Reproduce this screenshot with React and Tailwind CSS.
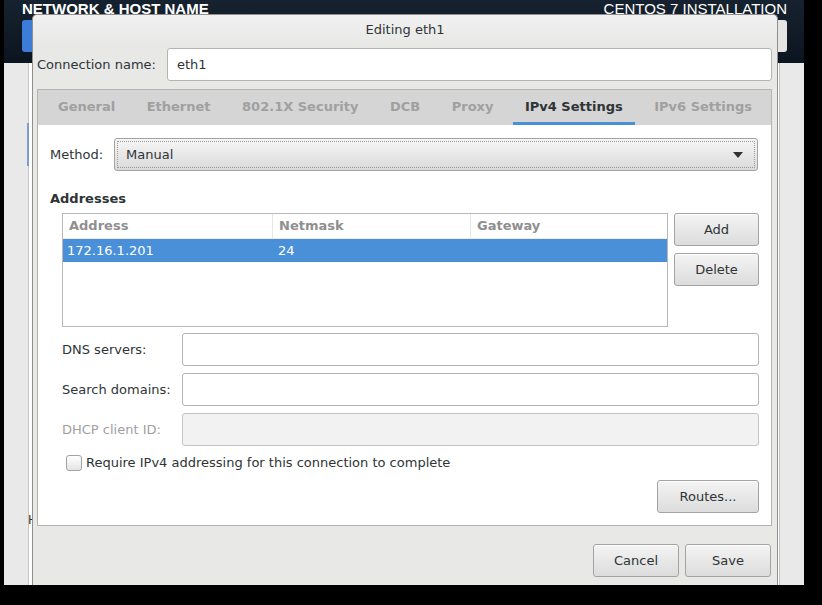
const TABS = [
    { label: "General" },
    { label: "Ethernet" },
    { label: "802.1X Security" },
    { label: "DCB" },
    { label: "Proxy" },
    { label: "IPv4 Settings", active: true },
    { label: "IPv6 Settings" },
];

const FONT = { fontFamily: '"DejaVu Sans", Verdana, sans-serif' };

function GtkButton({ children, className = "" }) {
    return (
        <button
            className={`h-[33px] rounded-[3px] border border-[#a3a3a3] bg-gradient-to-b from-[#f4f4f4] to-[#dcdcdc]
                        text-[13px] text-[#2e3436] flex items-center justify-center shadow-[inset_0_1px_0_#ffffff] ${className}`}
        >
            {children}
        </button>
    );
}

function TextEntry({ value = "", disabled = false, className = "" }) {
    return (
        <div
            className={`h-[33px] rounded-[3px] border flex items-center px-[9px] text-[13px] text-[#2e3436] ${
                disabled ? "bg-[#f2f2f2] border-[#c4c4c4]" : "bg-white border-[#b4b4b4]"
            } ${className}`}
        >
            {value}
        </div>
    );
}

function FieldRow({ label, disabled = false, className = "" }) {
    return (
        <div className={`flex items-center ${className}`}>
            <span className={`w-[120px] text-[13px] ${disabled ? "text-[#a0a0a0]" : "text-[#2e3436]"}`}>
                {label}
            </span>
            <TextEntry disabled={disabled} className="flex-1" />
        </div>
    );
}

function AddressTable() {
    return (
        <div className="flex-1 h-[114px] border border-[#b8b8b8] bg-white">
            {/* Column header */}
            <div className="flex h-[25px] border-b border-[#ececec] text-[13px] font-bold text-[#8f8f8f]">
                <div className="w-[210px] pl-[6px] flex items-center border-r border-[#e6e6e6]">Address</div>
                <div className="w-[198px] pl-[6px] flex items-center border-r border-[#e6e6e6]">Netmask</div>
                <div className="flex-1 pl-[6px] flex items-center">Gateway</div>
            </div>
            {/* Selected row */}
            <div className="flex h-[23px] bg-[#4a90d9] text-[13px] text-white">
                <div className="w-[210px] pl-[4px] flex items-center">172.16.1.201</div>
                <div className="w-[198px] pl-[5px] flex items-center">24</div>
                <div className="flex-1" />
            </div>
        </div>
    );
}

function Ipv4Page() {
    return (
        <div className="flex-1 bg-white pt-[13px] pl-[12px] pr-[12px] flex flex-col">
            {/* Method */}
            <div className="flex items-center">
                <span className="w-[64px] text-[13px] text-[#2e3436]">Method:</span>
                <div className="flex-1 mr-px h-[33px] rounded-[3px] border border-[#a3a3a3] bg-gradient-to-b from-[#f6f6f6] to-[#dadada] p-[2px]">
                    <div className="h-full border border-dotted border-[#9a9a9a] flex items-center justify-between pl-[8px] pr-[11px]">
                        <span className="text-[13px] text-[#2e3436]">Manual</span>
                        <svg width="10" height="6" viewBox="0 0 10 6">
                            <path d="M0 0h10L5 6z" fill="#2e3436" />
                        </svg>
                    </div>
                </div>
            </div>

            {/* Addresses */}
            <div className="mt-[20px] h-[16px] flex items-center text-[13px] font-bold text-[#2e3436]">Addresses</div>
            <div className="mt-[6px] ml-[12px] flex gap-[6px]">
                <AddressTable />
                <div className="w-[85px] flex flex-col gap-[7px]">
                    <GtkButton>Add</GtkButton>
                    <GtkButton>Delete</GtkButton>
                </div>
            </div>

            {/* DNS / search / DHCP */}
            <div className="ml-[12px] flex flex-col gap-[7px] mt-[6px]">
                <FieldRow label="DNS servers:" />
                <FieldRow label="Search domains:" />
                <FieldRow label="DHCP client ID:" disabled />
            </div>

            {/* Checkbox */}
            <div className="mt-[9px] ml-[16px] h-[16px] flex items-center gap-[4px]">
                <div className="w-[16px] h-[16px] rounded-[3px] border border-[#a3a3a3] bg-gradient-to-b from-white to-[#e4e4e4]" />
                <span className="text-[13px] text-[#2e3436]">Require IPv4 addressing for this connection to complete</span>
            </div>

            <div className="mt-[9px] flex justify-end">
                <GtkButton className="w-[102px]">Routes...</GtkButton>
            </div>
        </div>
    );
}

function EditDialog() {
    return (
        <div
            className="absolute left-[32px] top-[14px] w-[746px] h-[571px] bg-[#e8e8e7] border border-[#8f8f8f] border-b-0
                       rounded-t-[5px] flex flex-col pl-[4px] pr-[5px]"
            style={FONT}
        >
            {/* Title */}
            <div className="h-[29px] -ml-[4px] -mr-[5px] rounded-t-[5px] bg-gradient-to-b from-[#f1f1f1] to-[#e8e8e7] flex items-center justify-center text-[13px] text-[#2e3436]">
                Editing eth1
            </div>

            {/* Connection name */}
            <div className="mt-[4px] flex items-center">
                <span className="w-[130px] text-[13px] text-[#2e3436]">Connection name:</span>
                <TextEntry value="eth1" className="flex-1" />
            </div>

            {/* Notebook */}
            <div className="mt-[8px] h-[437px] border border-[#b3b3b3] flex flex-col">
                <div className="h-[35px] bg-[#d5d5d5] flex pl-[8px] gap-[7.5px]">
                    {TABS.map((t) => (
                        <div
                            key={t.label}
                            className={`px-[12px] pt-[1px] flex items-center border-b-[3px] text-[13px] font-bold ${
                                t.active
                                    ? "border-[#4a90d9] text-[#2e3436]"
                                    : "border-transparent text-[#a0a0a0]"
                            }`}
                        >
                            {t.label}
                        </div>
                    ))}
                </div>
                <Ipv4Page />
            </div>

            {/* Footer buttons */}
            <div className="mt-[18px] flex justify-end gap-[6px] pr-px">
                <GtkButton className="w-[86px]">Cancel</GtkButton>
                <GtkButton className="w-[86px]">Save</GtkButton>
            </div>
        </div>
    );
}

export default function App() {
    return (
        <div className="relative w-[822px] h-[605px] bg-black overflow-hidden">
            <div className="ml-[4px] w-[800px] h-[585px] flex flex-col">
                {/* Anaconda header */}
                <div
                    className="h-[63px] bg-gradient-to-b from-[#16222f] to-[#0b1520] flex justify-between pl-[18px] pr-[17px]"
                    style={{ fontFamily: '"Liberation Sans", Arial, sans-serif' }}
                >
                    <div className="flex flex-col">
                        <span className="text-[15px] leading-[17px] font-bold text-white">NETWORK &amp; HOST NAME</span>
                        <div className="mt-[3px] w-[64px] h-[32px] rounded-[3px] bg-[#3b7dd8]" />
                    </div>
                    <div className="flex flex-col items-end">
                        <span className="text-[15px] leading-[17px] text-white">CENTOS 7 INSTALLATION</span>
                        <div className="mt-[3px] w-[60px] h-[32px] rounded-[3px] bg-[#e4e4e4]" />
                    </div>
                </div>

                {/* Spoke body behind the dialog */}
                <div className="flex-1 bg-[#e9e9e9] flex pl-[24px] pr-[24px]">
                    <div className="flex-1 bg-white border-l border-r border-[#c6c6c6] relative">
                        <div className="absolute left-[-2px] top-[60px] w-[2px] h-[43px] bg-[#7a9fcf]" />
                        <span className="absolute left-[-1px] top-[448px] text-[12px] text-[#2e3436]" style={FONT}>
                            Host name:
                        </span>
                    </div>
                </div>
            </div>
            <EditDialog />
        </div>
    );
}
